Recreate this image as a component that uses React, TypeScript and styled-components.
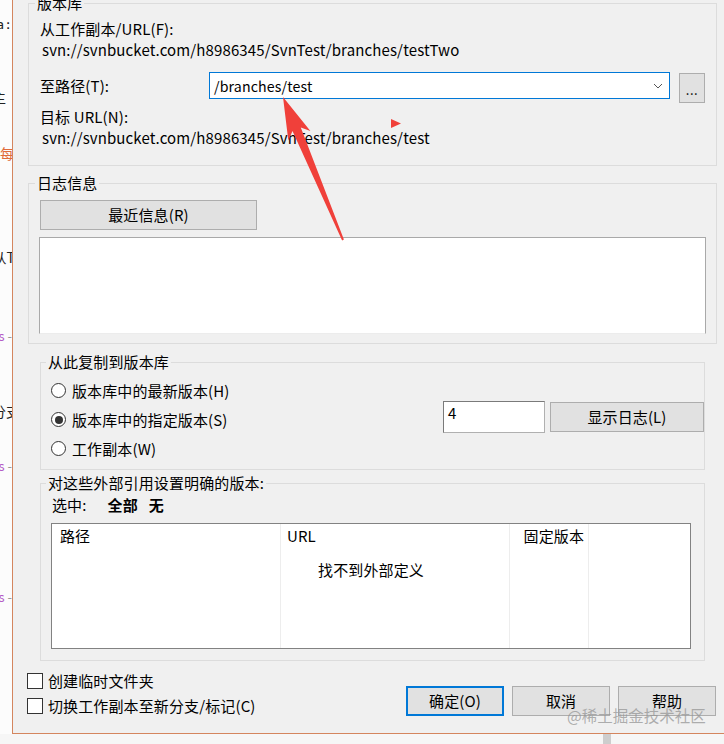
import React from "react";
import styled, { createGlobalStyle } from "styled-components";

const FONT = `"Noto Sans CJK SC", "Noto Sans", sans-serif`;

const Global = createGlobalStyle`
  html, body { margin: 0; padding: 0; }
  body { background: #fcfcfc; font-family: ${FONT}; }
`;

const Screen = styled.div`
  position: relative;
  width: 724px;
  height: 744px;
  overflow: hidden;
  background: #fcfcfc;
`;

/* ---------- page behind the dialog ---------- */
const BackPage = styled.div`
  display: flex;
  flex-direction: column;
  width: 12px;
  overflow: hidden;
`;

const BackLine = styled.div<{ $mt: number; $color: string; $pr: number; $mono?: boolean; $size: number }>`
  display: flex;
  justify-content: flex-end;
  height: 20px;
  margin-top: ${(p) => p.$mt}px;
  padding-right: ${(p) => Math.max(p.$pr, 0)}px;
  white-space: nowrap;
  color: ${(p) => p.$color};
  font: ${(p) => p.$size}px/20px ${(p) => (p.$mono ? `"DejaVu Sans Mono", monospace` : FONT)};
  & > span {
    margin-right: ${(p) => Math.min(p.$pr, 0)}px;
  }
`;

const Dash = styled.span`
  color: #999;
`;

const BottomStrip = styled.div`
  position: absolute;
  left: 0;
  right: 0;
  bottom: 0;
  height: 10px;
  background: #f6f6f6;
  display: flex;
  padding-left: 603px;
`;

const ScrollThumb = styled.div`
  width: 8px;
  height: 100%;
  background: #cdcdcd;
`;

/* ---------- dialog ---------- */
const Window = styled.div`
  position: absolute;
  left: 12px;
  top: -6px;
  width: 720px;
  box-sizing: border-box;
  border-left: 1px solid #d4855e;
  border-bottom: 1px solid #d4855e;
  background: #f0f0f0;
  padding: 0 15px 15px 15px;
  font: 15px/20px ${FONT};
  letter-spacing: 0.12px;
  color: #000;
  display: flex;
  flex-direction: column;
`;

const Group = styled.fieldset<{ $inset?: boolean; $mt: number; $pb: number; $pr: number; $pl: number }>`
  margin: ${(p) => p.$mt}px ${(p) => (p.$inset ? 12 : 0)}px 0;
  min-width: 0;
  border: 1px solid #dcdcdc;
  padding: 0 ${(p) => p.$pr}px ${(p) => p.$pb}px ${(p) => p.$pl}px;
  display: flex;
  flex-direction: column;
`;

const Legend = styled.legend<{ $ml: number }>`
  padding: 0 2px;
  margin-left: ${(p) => p.$ml}px;
  font: 15px/18px ${FONT};
`;

const TextLine = styled.div<{ $mt?: number; $ml?: number }>`
  height: 20px;
  line-height: 20px;
  margin-top: ${(p) => p.$mt ?? 0}px;
  margin-left: ${(p) => p.$ml ?? 0}px;
  white-space: nowrap;
`;

const PathRow = styled.div`
  display: flex;
  align-items: flex-start;
  margin-top: 12px;
`;

const RowLabel = styled.div`
  width: 169px;
  flex: none;
  margin-top: 4px;
  line-height: 20px;
`;

const Combo = styled.div`
  flex: 1;
  height: 27px;
  box-sizing: border-box;
  border: 1px solid #0078d7;
  background: #fff;
  display: flex;
  align-items: center;
  padding: 0 6px 0 4px;
`;

const ComboText = styled.span`
  flex: 1;
  font-size: 14.2px;
  line-height: 20px;
`;

const BrowseButton = styled.div`
  width: 26px;
  height: 30px;
  margin: 1px 0 0 9px;
  box-sizing: border-box;
  border: 1px solid #adadad;
  background: #e1e1e1;
  display: flex;
  justify-content: center;
  align-items: flex-end;
  padding-bottom: 6px;
  font-size: 13px;
  line-height: 12px;
  letter-spacing: 0.5px;
`;

const Button = styled.div<{ $w: number; $h?: number; $mt?: number; $default?: boolean }>`
  width: ${(p) => p.$w}px;
  height: ${(p) => p.$h ?? 30}px;
  margin-top: ${(p) => p.$mt ?? 0}px;
  flex: none;
  box-sizing: border-box;
  border: ${(p) => (p.$default ? "2px solid #0078d7" : "1px solid #adadad")};
  background: #e1e1e1;
  display: flex;
  align-items: center;
  justify-content: center;
  line-height: 20px;
`;

const LogArea = styled.div`
  height: 97px;
  margin: 7px -1px 0;
  box-sizing: border-box;
  background: #fff;
  border: 1px solid #a9a9a9;
  border-bottom-color: #ececec;
`;

const CopyRow = styled.div`
  display: flex;
  align-items: flex-start;
  margin-top: 5px;
`;

const RadioList = styled.div`
  display: flex;
  flex-direction: column;
  flex: 1;
`;

const RadioRow = styled.div`
  height: 29px;
  display: flex;
  align-items: center;
  gap: 6px;
`;

const RadioCircle = styled.span<{ $checked?: boolean }>`
  width: 15px;
  height: 15px;
  box-sizing: border-box;
  border-radius: 50%;
  border: 1px solid #333;
  background: #fff;
  display: flex;
  align-items: center;
  justify-content: center;
  &::after {
    content: "";
    width: 8px;
    height: 8px;
    border-radius: 50%;
    background: ${(p) => (p.$checked ? "#333" : "transparent")};
  }
`;

const RevInput = styled.div`
  width: 102px;
  height: 32px;
  margin-top: 25px;
  box-sizing: border-box;
  border: 1px solid #7a7a7a;
  border-right-color: #b0b0b0;
  border-bottom-color: #b0b0b0;
  background: #fff;
  padding: 1px 0 0 4px;
  line-height: 20px;
  margin-right: 5px;
`;

const SelectRow = styled.div`
  display: flex;
  height: 20px;
  margin-top: 3px;
  margin-left: 1px;
  line-height: 20px;
`;

const SelectLink = styled.span<{ $ml: number }>`
  margin-left: ${(p) => p.$ml}px;
  font-weight: 700;
`;

const List = styled.div`
  position: relative;
  height: 126px;
  margin: 8px 13px 0 0;
  box-sizing: border-box;
  border: 1px solid #828282;
  background: #fff;
  display: flex;
`;

const Column = styled.div<{ $w?: number; $pl: number; $pr?: number; $right?: boolean; $last?: boolean }>`
  ${(p) => (p.$w ? `width: ${p.$w}px; flex: none;` : "flex: 1;")}
  box-sizing: border-box;
  border-right: ${(p) => (p.$last ? "none" : "1px solid #ededed")};
  padding: 2px ${(p) => p.$pr ?? 0}px 0 ${(p) => p.$pl}px;
  text-align: ${(p) => (p.$right ? "right" : "left")};
  line-height: 20px;
`;

const EmptyNote = styled.div`
  position: absolute;
  left: 0;
  right: 0;
  top: 36px;
  text-align: center;
  line-height: 20px;
`;

const Footer = styled.div`
  display: flex;
  align-items: flex-start;
  margin-top: 7px;
`;

const CheckList = styled.div`
  display: flex;
  flex-direction: column;
  flex: 1;
  margin-left: -1px;
`;

const CheckRow = styled.div`
  height: 25px;
  display: flex;
  align-items: center;
  gap: 5px;
`;

const CheckBox = styled.span`
  width: 16px;
  height: 16px;
  box-sizing: border-box;
  border: 1px solid #333;
  background: #fff;
`;

const ButtonBar = styled.div`
  display: flex;
  gap: 8px;
  margin: 18px 1px 0 0;
`;

const Overlay = styled.svg`
  position: absolute;
  left: 0;
  top: 0;
  pointer-events: none;
`;

const Watermark = styled.div`
  position: absolute;
  left: 567px;
  top: 705px;
  font: 15.5px/20px ${FONT};
  color: rgba(150, 150, 150, 0.75);
  white-space: nowrap;
`;

type BackItem = { mt: number; text: string; color: string; pr: number; mono?: boolean; size: number; dash?: boolean };

const backLines: BackItem[] = [
  { mt: 15, text: "a:", color: "#222", pr: 0, mono: true, size: 13 },
  { mt: 52, text: "主", color: "#222", pr: 6, size: 14 },
  { mt: 36, text: "每", color: "#e06b3b", pr: -2, size: 14 },
  { mt: 84, text: "从T", color: "#222", pr: -3, size: 14 },
  { mt: 59, text: "s", color: "#b45ac6", pr: 0, size: 13, dash: true },
  { mt: 55, text: "分支", color: "#222", pr: -8, size: 14 },
  { mt: 35, text: "s", color: "#b45ac6", pr: 0, size: 13, dash: true },
  { mt: 111, text: "s", color: "#b45ac6", pr: 0, size: 13, dash: true },
];

const Chevron = () => (
  <svg width="10" height="6" viewBox="0 0 10 6">
    <path d="M1 1 L5 5 L9 1" fill="none" stroke="#555" strokeWidth="1" />
  </svg>
);

export default function App() {
  return (
    <Screen>
      <Global />
      <BackPage>
        {backLines.map((l, i) => (
          <BackLine key={i} $mt={l.mt} $color={l.color} $pr={l.pr} $mono={l.mono} $size={l.size}>
            <span>
              {l.text}
              {l.dash && <Dash> -</Dash>}
            </span>
          </BackLine>
        ))}
      </BackPage>
      <BottomStrip>
        <ScrollThumb />
      </BottomStrip>

      <Window>
        <Group $mt={0} $pb={17} $pl={11} $pr={11}>
          <Legend $ml={-5}>版本库</Legend>
          <TextLine $mt={7}>从工作副本/URL(F):</TextLine>
          <TextLine $mt={1} $ml={2}>svn://svnbucket.com/h8986345/SvnTest/branches/testTwo</TextLine>
          <PathRow>
            <RowLabel>至路径(T):</RowLabel>
            <Combo>
              <ComboText>/branches/test</ComboText>
              <Chevron />
            </Combo>
            <BrowseButton>...</BrowseButton>
          </PathRow>
          <TextLine $mt={4}>目标 URL(N):</TextLine>
          <TextLine $mt={1} $ml={2}>svn://svnbucket.com/h8986345/SvnTest/branches/test</TextLine>
        </Group>

        <Group $mt={8} $pb={9} $pl={11} $pr={11}>
          <Legend $ml={-5}>日志信息</Legend>
          <Button $w={217} $mt={8}>最近信息(R)</Button>
          <LogArea />
        </Group>

        <Group $inset $mt={9} $pb={6} $pl={10} $pr={0}>
          <Legend $ml={-5}>从此复制到版本库</Legend>
          <CopyRow>
            <RadioList>
              <RadioRow>
                <RadioCircle />
                版本库中的最新版本(H)
              </RadioRow>
              <RadioRow>
                <RadioCircle $checked />
                版本库中的指定版本(S)
              </RadioRow>
              <RadioRow>
                <RadioCircle />
                工作副本(W)
              </RadioRow>
            </RadioList>
            <RevInput>4</RevInput>
            <Button $w={154} $mt={26}>显示日志(L)</Button>
          </CopyRow>
        </Group>

        <Group $inset $mt={4} $pb={11} $pl={10} $pr={0}>
          <Legend $ml={-5}>对这些外部引用设置明确的版本:</Legend>
          <SelectRow>
            选中:
            <SelectLink $ml={21}>全部</SelectLink>
            <SelectLink $ml={11}>无</SelectLink>
          </SelectRow>
          <List>
            <Column $w={229} $pl={8}>路径</Column>
            <Column $w={229} $pl={6}>URL</Column>
            <Column $w={79} $pl={0} $pr={4} $right>固定版本</Column>
            <Column $pl={0} $last />
            <EmptyNote>找不到外部定义</EmptyNote>
          </List>
        </Group>

        <Footer>
          <CheckList>
            <CheckRow>
              <CheckBox />
              创建临时文件夹
            </CheckRow>
            <CheckRow>
              <CheckBox />
              切换工作副本至新分支/标记(C)
            </CheckRow>
          </CheckList>
          <ButtonBar>
            <Button $w={98} $default>确定(O)</Button>
            <Button $w={98}>取消</Button>
            <Button $w={98}>帮助</Button>
          </ButtonBar>
        </Footer>
      </Window>

      <Overlay width="724" height="744" viewBox="0 0 724 744">
        <polygon
          points="283,97 310.4,131.1 300.8,127.5 343.9,239.6 342.1,240.4 292.5,131 288.3,140.4"
          fill="#f0403a"
        />
        <polygon points="391,119 401,123.5 391,128" fill="#f0403a" />
      </Overlay>
      <Watermark>@稀土掘金技术社区</Watermark>
    </Screen>
  );
}
